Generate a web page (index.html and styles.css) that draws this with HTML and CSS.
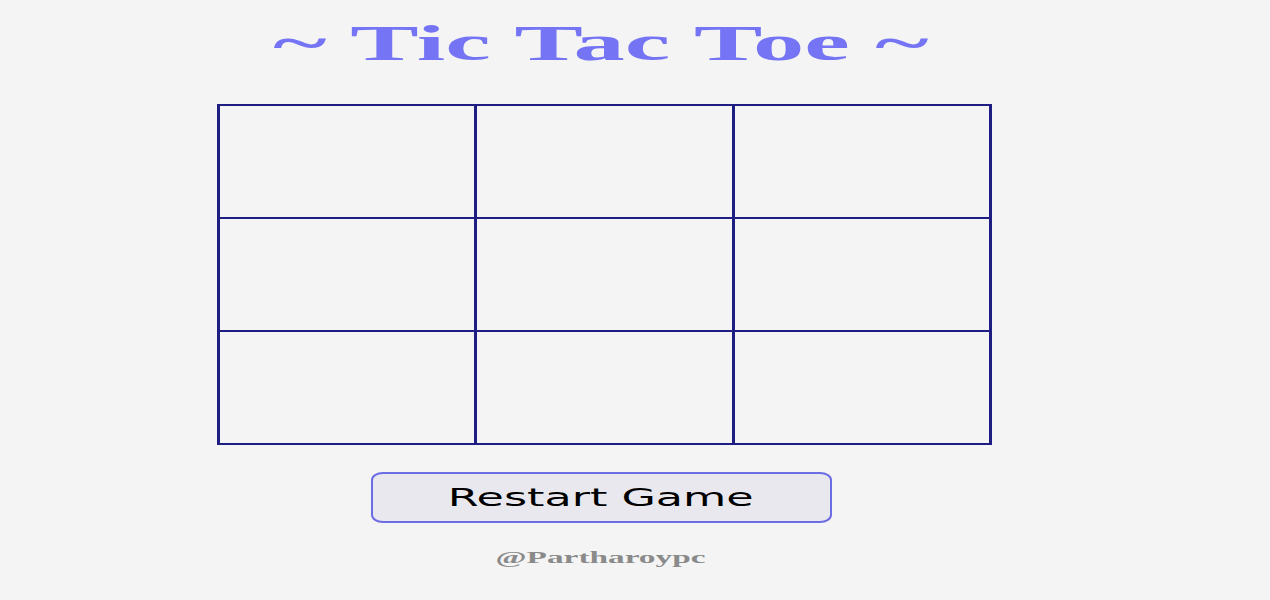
FILE: index.html
```html
<!DOCTYPE html>
<html>
<head>
<meta charset="utf-8">
<title>Tic Tac Toe</title>
<link rel="stylesheet" href="styles.css">
</head>
<body>
<main class="app">
  <h1 class="title"><span class="stretch-title">~ Tic Tac Toe ~</span></h1>
  <div class="board">
    <div class="cell"></div><div class="cell"></div><div class="cell"></div>
    <div class="cell"></div><div class="cell"></div><div class="cell"></div>
    <div class="cell"></div><div class="cell"></div><div class="cell"></div>
  </div>
  <button class="restart"><span class="stretch-btn">Restart Game</span></button>
  <p class="credit"><span class="stretch">@Partharoypc</span></p>
</main>
</body>
</html>
```
FILE: styles.css
```css
html, body {
  margin: 0;
  padding: 0;
  background: #f4f4f4;
}
.app {
  width: 1202px;
  display: flex;
  flex-direction: column;
  align-items: center;
  padding-top: 16px;
}
.title {
  margin: 0;
  font-family: "Liberation Serif", "Times New Roman", serif;
  font-weight: bold;
  font-size: 50px;
  line-height: 55px;
  color: #7474f4;
}
.stretch-title {
  display: inline-block;
  transform: scaleX(2.05);
  white-space: pre;
}
.stretch {
  display: inline-block;
  transform: scaleX(1.96);
  white-space: pre;
}
.board {
  margin-top: 33px;
  margin-left: 6px;
  display: grid;
  grid-template-columns: 254px 255px 254px;
  grid-template-rows: 111px 111px 111px;
  column-gap: 3px;
  row-gap: 2px;
  padding: 2px 3px;
  background: #1e1e82;
}
.cell {
  background: #f4f4f4;
}
.restart {
  margin-top: 27px;
  width: 461px;
  height: 51px;
  border: 2px solid #6c6ce4;
  border-radius: 12px / 8px;
  background: #e9e8ee;
  color: #000;
  font-family: "DejaVu Sans", Verdana, sans-serif;
  font-size: 24px;
  padding: 0;
  display: flex;
  align-items: center;
  justify-content: center;
}
.stretch-btn {
  display: inline-block;
  transform: scaleX(1.85);
  white-space: pre;
}
.credit {
  margin: 25px 0 0;
  font-family: "Liberation Serif", "Times New Roman", serif;
  font-weight: bold;
  font-size: 17px;
  line-height: 20px;
  color: #8a8a8a;
}
```
